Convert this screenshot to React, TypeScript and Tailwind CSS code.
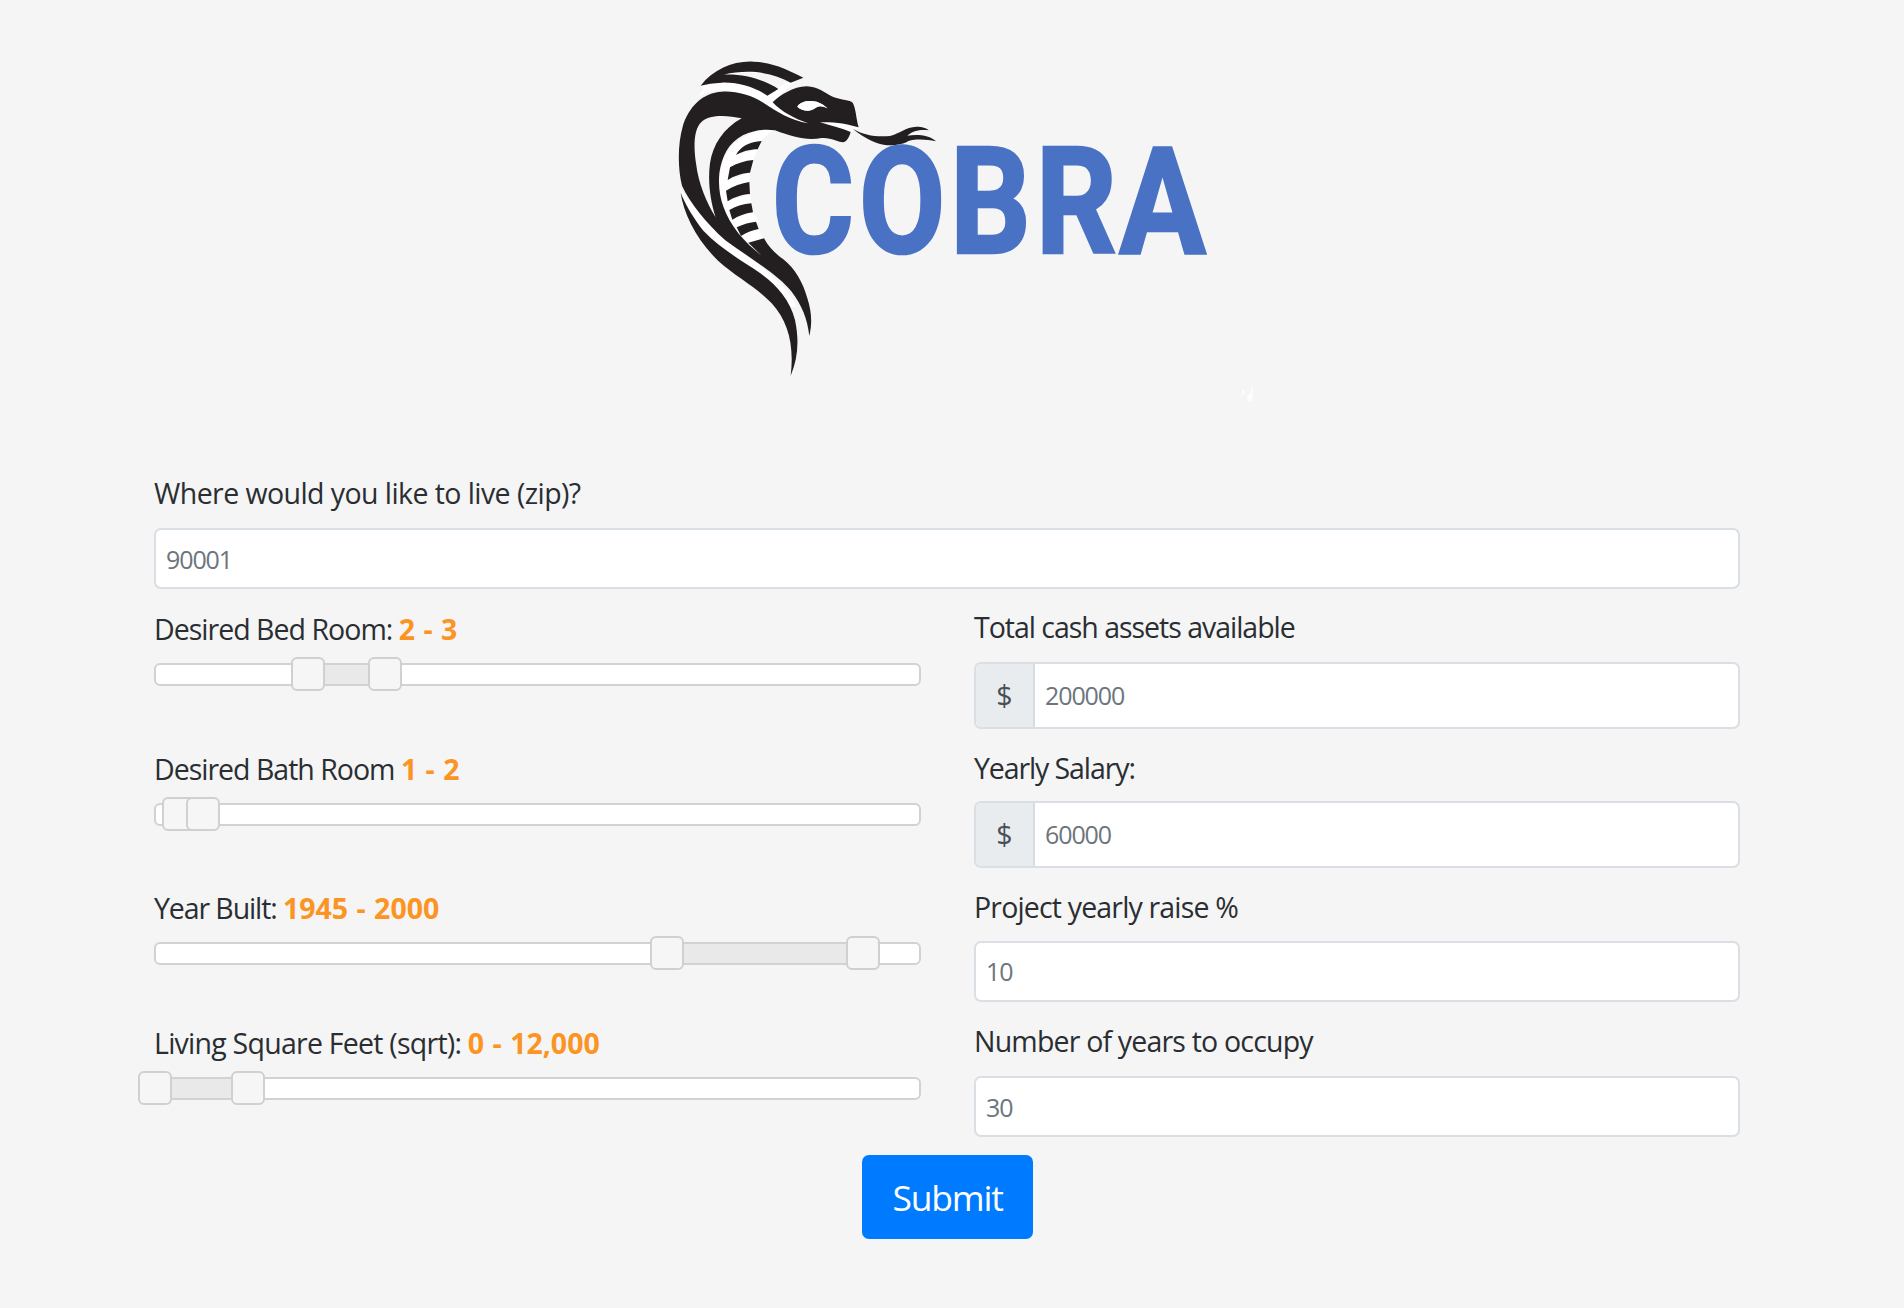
import type { ReactNode } from "react";

const INK = "#231f20";

function CobraLogo() {
  return (
    <svg className="block h-[370px] w-[600px]" viewBox="0 0 1800 1110" role="img" aria-label="Cobra">
      <g fill="#ffffff">
        <path d="M122 137C200 112 270 125 322 167L385 122C330 90 250 85 190 104L250 98C330 95 380 110 400 128L338 187C370 222 400 240 450 248L400 250C340 215 260 150 185 150C150 150 110 165 98 190L130 148Z" />
        <path d="M58 440C90 490 180 590 265 650C330 700 385 745 410 800L385 800C330 720 230 660 150 590C100 540 70 490 58 440Z" />
        <path d="M340 268C270 270 215 300 190 360C165 430 180 510 235 580L300 640L310 597L292 560L240 585L300 545L276 515L215 540L205 512L275 490L270 462L203 484L198 452L268 426L270 398L203 420L210 382L280 360L293 328L228 345L305 300Z" />
        <path d="M480 244C520 242 560 255 596 266L572 278C545 264 510 258 480 250Z" />
      </g>
      <g fill={INK}>
        <path d="M122 137C160 88 220 62 280 65C340 67 385 90 430 113L392 128C340 98 270 86 190 104C250 101 310 118 355 147L322 167C285 142 235 126 185 128C160 129 140 132 122 137Z" />
        <path
          fillRule="evenodd"
          d="M338 187C360 165 400 140 440 139C475 140 495 160 520 171C545 180 570 180 578 188C588 205 588 235 596 262C560 252 530 246 480 247C515 258 545 264 572 276C568 290 562 304 550 307C530 306 515 292 485 294C440 302 400 292 345 271C310 266 280 272 250 285C205 308 185 350 178 400C172 465 190 520 235 580C255 605 280 628 305 647L265 608L312 595C325 620 345 640 370 658C405 685 430 730 442 775C455 815 457 850 448 888C442 835 425 795 395 755C350 700 270 655 195 600C140 550 90 490 66 437C52 380 54 310 68 260C85 200 130 157 185 155C225 152 275 165 310 188C350 215 390 240 445 250C400 235 365 215 338 187ZM245 235C200 225 150 223 125 245C98 270 102 330 108 370C115 430 140 490 167 532C150 480 143 420 150 370C158 315 190 265 245 235ZM412 200C420 185 445 180 470 185C485 190 495 198 503 205C485 197 475 197 465 205C450 217 425 212 412 200Z"
        />
        <path d="M62 458C70 520 110 600 175 663C230 712 290 742 335 790C385 845 403 915 392 1007C414 955 418 900 405 840C390 780 350 735 300 699C250 665 180 625 130 572C100 535 75 490 62 458Z" />
        <path d="M228 345C240 320 270 305 305 303L293 328C270 328 245 335 228 345Z" />
        <path d="M210 382C230 370 255 362 280 360L270 398C245 400 220 408 203 420Z" />
        <path d="M198 452C220 438 245 430 268 426L270 462C245 464 220 472 203 484Z" />
        <path d="M208 510C230 498 250 492 274 490L279 517C255 520 235 528 217 539Z" />
        <path d="M230 562C250 552 270 547 288 545L296 567C275 572 258 578 243 588Z" />
        <path d="M578 266C610 285 650 292 690 288C720 280 735 262 770 260C785 260 800 264 806 271C785 268 760 270 742 287C770 282 810 285 828 304C800 298 770 296 745 303C730 314 690 320 660 312C630 302 600 285 578 266Z" />
      </g>
      <path d="M412 200C420 185 445 180 470 185C485 190 495 198 503 205C485 197 475 197 465 205C450 217 425 212 412 200Z" fill="#ffffff" />
      <g fill="#4a72c4" stroke="#4a72c4" strokeWidth="8" fontFamily="Roboto" fontWeight="700" fontSize="444">
        <text transform="translate(336 638) scale(.845 1)">C</text>
        <text transform="translate(597 638) scale(.845 1)">O</text>
        <text transform="translate(870 638) scale(.855 1)">B</text>
        <text transform="translate(1127 638) scale(.855 1)">R</text>
        <text transform="translate(1378 638) scale(.87 1)">A</text>
      </g>
      <path d="M1774 1042h4v42h-16v-18l8-5zM1746 1050h7v14h-7z" fill="#fdfdfd" />
    </svg>
  );
}

function Label({ children, className }: { children: ReactNode; className: string }) {
  return <div className={`whitespace-pre pt-px text-[28.5px] text-[#2a2e32] ${className}`}>{children}</div>;
}

function Value({ children }: { children: ReactNode }) {
  return <span className="font-bold tracking-[0px] text-[#fb9423] [word-spacing:1px]">{children}</span>;
}

function Slider({ from, to }: { from: number; to: number }) {
  const handle = "absolute -top-2 size-[34px] rounded-[6px] border-2 border-[#d0d0d0] bg-[#f6f6f6]";
  return (
    <div className="relative h-[23px] rounded-[6px] border-2 border-[#d2d2d2] bg-white">
      <div className="absolute inset-y-0 bg-[#e9e9e9]" style={{ left: from, width: to - from }} />
      <div className={handle} style={{ left: from - 19 }} />
      <div className={handle} style={{ left: to - 19 }} />
    </div>
  );
}

function Field({ value, prefix, className }: { value: string; prefix?: boolean; className: string }) {
  return (
    <div className={`flex overflow-hidden rounded-[7px] border-2 border-[#d9dfe4] bg-white ${className}`}>
      {prefix && (
        <div className="flex w-[59px] items-center justify-center border-r-2 border-[#d5dbe1] bg-[#e9ecef] text-[28.5px] text-[#495057]">$</div>
      )}
      <div className="flex items-center pl-[10px] pt-px text-[25px] tracking-[-1.1px] text-[#6c757d]">{value}</div>
    </div>
  );
}

export default function App() {
  return (
    <main className="h-[1308px] w-full overflow-hidden bg-[#f5f5f5] pl-[154px] pt-10 font-['Open_Sans',sans-serif]">
      <div className="ml-[506px] h-[428px]">
        <CobraLogo />
      </div>
      <div className="w-[1586px]">
        <Label className="h-[60px] leading-[48px] tracking-[-0.57px]">Where would you like to live (zip)?</Label>
        <Field value="90001" className="h-[61px] pt-[2px]" />
        <div className="mt-[13px] grid grid-cols-[767px_766px] gap-x-[53px]">
          <div className="h-[139px]">
            <Label className="h-[61px] leading-[52px] tracking-[-0.98px]">Desired Bed Room: <Value>2 - 3</Value></Label>
            <Slider from={154} to={231} />
          </div>
          <div className="h-[139px]">
            <Label className="h-[60px] leading-[49px] tracking-[-1.02px]">Total cash assets available</Label>
            <Field value="200000" prefix className="h-[67px]" />
          </div>
          <div className="h-[140px]">
            <Label className="h-[62px] leading-[55px] tracking-[-1px]">Desired Bath Room <Value>1 - 2</Value></Label>
            <Slider from={25} to={49} />
          </div>
          <div className="h-[140px]">
            <Label className="h-[60px] leading-[52px] tracking-[-1.1px]">Yearly Salary:</Label>
            <Field value="60000" prefix className="h-[67px]" />
          </div>
          <div className="h-[135px]">
            <Label className="h-[61px] leading-[53px] tracking-[-1.1px]">Year Built: <Value>1945 - 2000</Value></Label>
            <Slider from={513} to={709} />
          </div>
          <div className="h-[135px]">
            <Label className="h-[60px] leading-[50px] tracking-[-0.83px]">Project yearly raise %</Label>
            <Field value="10" className="h-[61px]" />
          </div>
          <div className="h-[139px]">
            <Label className="h-[61px] leading-[52px] tracking-[-0.75px]">Living Square Feet (sqrt): <Value>0 - 12,000</Value></Label>
            <Slider from={1} to={94} />
          </div>
          <div className="h-[139px]">
            <Label className="h-[60px] leading-[49px] tracking-[-0.81px]">Number of years to occupy</Label>
            <Field value="30" className="h-[61px] pt-px" />
          </div>
        </div>
        <button className="ml-[708px] block h-[84px] w-[171px] rounded-[7px] bg-[#007bff] text-center text-[35.5px] leading-[83px] tracking-[-1.2px] text-white">Submit</button>
      </div>
    </main>
  );
}
